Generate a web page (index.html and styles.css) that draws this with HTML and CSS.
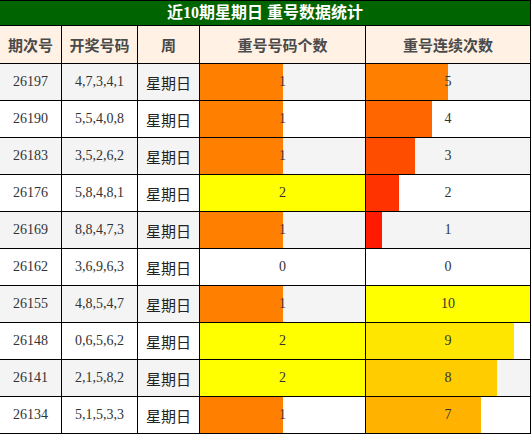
FILE: index.html
```html
<!DOCTYPE html>
<html>
<head>
<meta charset="utf-8">
<link rel="stylesheet" href="styles.css">
</head>
<body>
<div class="board">
  <div class="title">近10期星期日 重号数据统计</div>
  <div class="hd">期次号</div><div class="hd">开奖号码</div><div class="hd">周</div><div class="hd">重号号码个数</div><div class="hd">重号连续次数</div>

  <div class="c g num">26197</div><div class="c g num">4,7,3,4,1</div><div class="c g wk">星期日</div>
  <div class="c g bc"><span class="bar" style="width:50%;background:#ff8000"></span><span class="v">1</span></div>
  <div class="c g bc"><span class="bar" style="width:50%;background:#ff8000"></span><span class="v">5</span></div>

  <div class="c num">26190</div><div class="c num">5,5,4,0,8</div><div class="c wk">星期日</div>
  <div class="c bc"><span class="bar" style="width:50%;background:#ff8000"></span><span class="v">1</span></div>
  <div class="c bc"><span class="bar" style="width:40%;background:#ff6600"></span><span class="v">4</span></div>

  <div class="c g num">26183</div><div class="c g num">3,5,2,6,2</div><div class="c g wk">星期日</div>
  <div class="c g bc"><span class="bar" style="width:50%;background:#ff8000"></span><span class="v">1</span></div>
  <div class="c g bc"><span class="bar" style="width:30%;background:#ff4d00"></span><span class="v">3</span></div>

  <div class="c num">26176</div><div class="c num">5,8,4,8,1</div><div class="c wk">星期日</div>
  <div class="c bc"><span class="bar" style="width:100%;background:#ffff00"></span><span class="v">2</span></div>
  <div class="c bc"><span class="bar" style="width:20%;background:#ff3300"></span><span class="v">2</span></div>

  <div class="c g num">26169</div><div class="c g num">8,8,4,7,3</div><div class="c g wk">星期日</div>
  <div class="c g bc"><span class="bar" style="width:50%;background:#ff8000"></span><span class="v">1</span></div>
  <div class="c g bc"><span class="bar" style="width:10%;background:#ff1a00"></span><span class="v">1</span></div>

  <div class="c num">26162</div><div class="c num">3,6,9,6,3</div><div class="c wk">星期日</div>
  <div class="c bc"><span class="v">0</span></div>
  <div class="c bc"><span class="v">0</span></div>

  <div class="c g num">26155</div><div class="c g num">4,8,5,4,7</div><div class="c g wk">星期日</div>
  <div class="c g bc"><span class="bar" style="width:50%;background:#ff8000"></span><span class="v">1</span></div>
  <div class="c g bc"><span class="bar" style="width:100%;background:#ffff00"></span><span class="v">10</span></div>

  <div class="c num">26148</div><div class="c num">0,6,5,6,2</div><div class="c wk">星期日</div>
  <div class="c bc"><span class="bar" style="width:100%;background:#ffff00"></span><span class="v">2</span></div>
  <div class="c bc"><span class="bar" style="width:90%;background:#ffe600"></span><span class="v">9</span></div>

  <div class="c g num">26141</div><div class="c g num">2,1,5,8,2</div><div class="c g wk">星期日</div>
  <div class="c g bc"><span class="bar" style="width:100%;background:#ffff00"></span><span class="v">2</span></div>
  <div class="c g bc"><span class="bar" style="width:80%;background:#ffcc00"></span><span class="v">8</span></div>

  <div class="c num">26134</div><div class="c num">5,1,5,3,3</div><div class="c wk">星期日</div>
  <div class="c bc"><span class="bar" style="width:50%;background:#ff8000"></span><span class="v">1</span></div>
  <div class="c bc"><span class="bar" style="width:70%;background:#ffb300"></span><span class="v">7</span></div>
</div>
</body>
</html>
```
FILE: styles.css
```css
html, body {
  margin: 0;
  padding: 0;
  background: #fff;
}
.board {
  display: grid;
  grid-template-columns: 61px 75px 61px 165px 164px;
  grid-template-rows: 24px 37px repeat(10, 36px);
  gap: 1px;
  padding: 1px 1px 1px 0;
  width: 530px;
  background: #000;
}
.title {
  grid-column: 1 / -1;
  background: #006400;
  color: #fff;
  font-family: "Liberation Serif", "Noto Sans CJK SC", serif;
  font-weight: bold;
  font-size: 16px;
  display: flex;
  align-items: center;
  justify-content: center;
  line-height: 1;
}
.hd {
  background: #fff1e3;
  color: #4a4a4a;
  font-family: "Noto Sans CJK SC", sans-serif;
  font-weight: bold;
  font-size: 15px;
  display: flex;
  align-items: center;
  justify-content: center;
}
.c {
  background: #fff;
  color: #333;
  display: flex;
  align-items: center;
  justify-content: center;
}
.c.g {
  background: #f4f4f4;
}
.num {
  font-family: "Liberation Serif", serif;
  font-size: 14px;
}
.wk {
  font-family: "Noto Sans CJK SC", sans-serif;
  font-size: 15px;
  color: #222;
}
.bc {
  display: grid;
  grid-template-columns: 100%;
  grid-template-rows: 100%;
  align-items: stretch;
}
.bar {
  grid-area: 1 / 1;
  justify-self: start;
  height: 100%;
}
.v {
  grid-area: 1 / 1;
  align-self: center;
  justify-self: center;
  font-family: "Liberation Serif", serif;
  font-size: 14px;
  color: #333;
}
```
